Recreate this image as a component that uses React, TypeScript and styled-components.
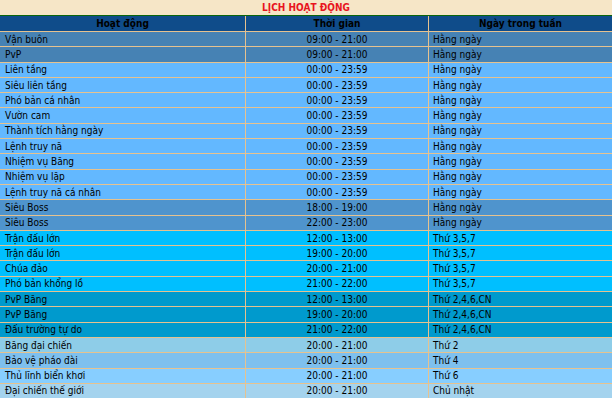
import React from "react";
import styled, { createGlobalStyle } from "styled-components";

const GlobalStyle = createGlobalStyle`
  html, body { margin: 0; padding: 0; background: #ffffff; }
  body { font-family: "DejaVu Sans Condensed", "DejaVu Sans", "Liberation Sans", sans-serif; }
`;

const Table = styled.div`
  width: 612px;
  display: flex;
  flex-direction: column;
  gap: 1px;
  background: #e6c28f;
`;

const TitleBar = styled.div`
  height: 15px;
  background: #f6e6c7;
  border-bottom: 1px solid #0b660b;
  display: flex;
  align-items: center;
  justify-content: center;
  color: #e8141e;
  font-weight: bold;
  font-size: 10px;
  margin-bottom: -1px;
`;

const Row = styled.div<{ $h: number }>`
  display: grid;
  grid-template-columns: 245px 182px 1fr;
  column-gap: 1px;
  height: ${(p) => p.$h}px;
`;

const HeadCell = styled.div`
  background: #0f4c8a;
  color: #000;
  font-weight: bold;
  font-size: 10px;
  display: flex;
  align-items: center;
  justify-content: center;
`;

const Cell = styled.div<{ $bg: string; $align?: "left" | "center"; $pad?: number }>`
  background: ${(p) => p.$bg};
  color: #000;
  font-size: 10px;
  display: flex;
  align-items: center;
  justify-content: ${(p) => (p.$align === "center" ? "center" : "flex-start")};
  padding-left: ${(p) => (p.$align === "center" ? 0 : p.$pad ?? 5)}px;
  white-space: nowrap;
  overflow: hidden;
`;

type Item = { name: string; time: string; days: string; bg: string };

const C1 = "#4682b4";
const C2 = "#63b8ff";
const C3 = "#4f94cd";
const C4 = "#00bfff";
const C5 = "#009acd";

const rows: Item[] = [
  { name: "Vận buôn", time: "09:00 - 21:00", days: "Hằng ngày", bg: C1 },
  { name: "PvP", time: "09:00 - 21:00", days: "Hằng ngày", bg: C1 },
  { name: "Liên tầng", time: "00:00 - 23:59", days: "Hằng ngày", bg: C2 },
  { name: "Siêu liên tầng", time: "00:00 - 23:59", days: "Hằng ngày", bg: C2 },
  { name: "Phó bản cá nhân", time: "00:00 - 23:59", days: "Hằng ngày", bg: C2 },
  { name: "Vườn cam", time: "00:00 - 23:59", days: "Hằng ngày", bg: C2 },
  { name: "Thành tích hằng ngày", time: "00:00 - 23:59", days: "Hằng ngày", bg: C2 },
  { name: "Lệnh truy nã", time: "00:00 - 23:59", days: "Hằng ngày", bg: C2 },
  { name: "Nhiệm vụ Băng", time: "00:00 - 23:59", days: "Hằng ngày", bg: C2 },
  { name: "Nhiệm vụ lặp", time: "00:00 - 23:59", days: "Hằng ngày", bg: C2 },
  { name: "Lệnh truy nã cá nhân", time: "00:00 - 23:59", days: "Hằng ngày", bg: C2 },
  { name: "Siêu Boss", time: "18:00 - 19:00", days: "Hằng ngày", bg: C3 },
  { name: "Siêu Boss", time: "22:00 - 23:00", days: "Hằng ngày", bg: C3 },
  { name: "Trận đấu lớn", time: "12:00 - 13:00", days: "Thứ 3,5,7", bg: C4 },
  { name: "Trận đấu lớn", time: "19:00 - 20:00", days: "Thứ 3,5,7", bg: C4 },
  { name: "Chúa đảo", time: "20:00 - 21:00", days: "Thứ 3,5,7", bg: C4 },
  { name: "Phó bản khổng lồ", time: "21:00 - 22:00", days: "Thứ 3,5,7", bg: C4 },
  { name: "PvP Băng", time: "12:00 - 13:00", days: "Thứ 2,4,6,CN", bg: C5 },
  { name: "PvP Băng", time: "19:00 - 20:00", days: "Thứ 2,4,6,CN", bg: C5 },
  { name: "Đấu trường tự do", time: "21:00 - 22:00", days: "Thứ 2,4,6,CN", bg: C5 },
  { name: "Băng đại chiến", time: "20:00 - 21:00", days: "Thứ 2", bg: "#8ecde8" },
  { name: "Bảo vệ pháo đài", time: "20:00 - 21:00", days: "Thứ 4", bg: "#7ec0ee" },
  { name: "Thủ lĩnh biển khơi", time: "20:00 - 21:00", days: "Thứ 6", bg: "#87ceff" },
  { name: "Đại chiến thế giới", time: "20:00 - 21:00", days: "Chủ nhật", bg: "#a4d3ee" },
];

export default function App() {
  return (
    <>
      <GlobalStyle />
      <Table>
        <TitleBar>LỊCH HOẠT ĐỘNG</TitleBar>
        <Row $h={15}>
          <HeadCell>Hoạt động</HeadCell>
          <HeadCell>Thời gian</HeadCell>
          <HeadCell>Ngày trong tuần</HeadCell>
        </Row>
        {rows.map((r, i) => (
          <Row key={i} $h={14.3}>
            <Cell $bg={r.bg}>{r.name}</Cell>
            <Cell $bg={r.bg} $align="center">{r.time}</Cell>
            <Cell $bg={r.bg} $pad={4}>{r.days}</Cell>
          </Row>
        ))}
      </Table>
    </>
  );
}
